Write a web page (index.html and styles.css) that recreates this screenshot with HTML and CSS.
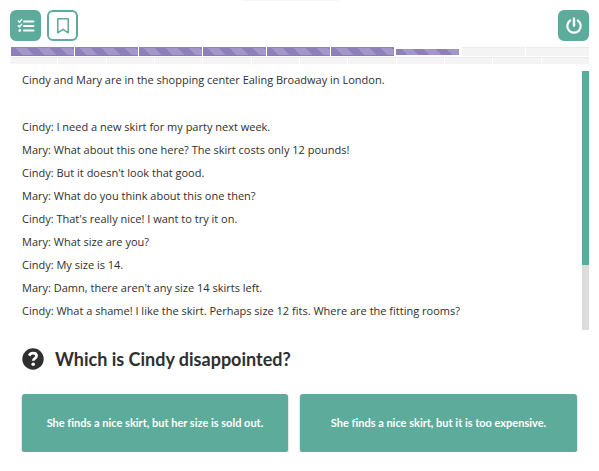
FILE: index.html
```html
<!DOCTYPE html>
<html lang="en">
<head>
    <meta charset="UTF-8">
    <meta name="viewport" content="width=device-width, initial-scale=1.0">
    <title>Reading exercise</title>
    <link rel="stylesheet" href="styles.css">
</head>
<body>
    <div class="handle"></div>
    <header class="toolbar">
        <button class="icon-btn" type="button" aria-label="Task list">
            <svg viewBox="0 0 18 16" width="18" height="16" fill="none" stroke="#fff">
                <path d="M7 3.5H16.5M7 8H16.5M7 12.5H16.5" stroke-width="1.9" stroke-linecap="round"/>
                <path d="M1.3 3L2.5 4.2L4.6 1.6M1.3 7.7L2.5 8.9L4.6 6.3" stroke-width="1.5" stroke-linecap="round" stroke-linejoin="round"/>
                <circle cx="2.8" cy="12.5" r="1.4" fill="#fff" stroke="none"/>
            </svg>
        </button>
        <button class="icon-btn outline" type="button" aria-label="Bookmark">
            <svg viewBox="0 0 14 18" width="14" height="18" fill="none" stroke="#5dab9a" stroke-width="1.5">
                <path d="M1.8 1.8H12.2V15.8L7 12.3L1.8 15.8Z" stroke-linejoin="round"/>
            </svg>
        </button>
        <button class="icon-btn power" type="button" aria-label="Quit">
            <svg viewBox="0 0 18 18" width="18" height="18" fill="none" stroke="#fff" stroke-linecap="round">
                <path d="M5.2 3.5A6.7 6.7 0 1 0 12.8 3.5" stroke-width="2.2"/>
                <path d="M9 1.8V8.5" stroke-width="2.4"/>
            </svg>
        </button>
    </header>

    <div class="progress">
        <div class="track steps">
            <span class="done"></span>
            <span class="done"></span>
            <span class="done"></span>
            <span class="done"></span>
            <span class="done"></span>
            <span class="done"></span>
            <span class="current"></span>
            <span></span>
            <span></span>
        </div>
        <div class="track parts">
            <span></span><span></span><span></span><span></span>
            <span></span><span></span><span></span><span></span>
            <span></span><span></span><span></span><span></span>
        </div>
    </div>

    <main>
        <section class="reader">
            <div class="text">
                <p class="intro">Cindy and Mary are in the shopping center Ealing Broadway in London.</p>
                <p>Cindy: I need a new skirt for my party next week.</p>
                <p>Mary: What about this one here? The skirt costs only 12 pounds!</p>
                <p>Cindy: But it doesn't look that good.</p>
                <p>Mary: What do you think about this one then?</p>
                <p>Cindy: That's really nice! I want to try it on.</p>
                <p>Mary: What size are you?</p>
                <p>Cindy: My size is 14.</p>
                <p>Mary: Damn, there aren't any size 14 skirts left.</p>
                <p>Cindy: What a shame! I like the skirt. Perhaps size 12 fits. Where are the fitting rooms?</p>
            </div>
            <div class="scrollbar"><div class="thumb"></div></div>
        </section>

        <section class="question">
            <svg viewBox="0 0 22 22" width="22" height="22" aria-hidden="true">
                <circle cx="11" cy="11" r="10.7" fill="#2f2f2f"/>
                <path d="M7.2 7.6C8 5.8 9.3 5.1 11.1 5.1C13.2 5.1 14.6 6.3 14.6 8C14.6 10.5 11.2 10.2 11.2 12.8" fill="none" stroke="#fff" stroke-width="2.7"/>
                <circle cx="11.2" cy="16.3" r="1.8" fill="#fff"/>
            </svg>
            <h1>Which is Cindy disappointed?</h1>
        </section>

        <div class="answers">
            <button type="button">She finds a nice skirt, but her size is sold out.</button>
            <button type="button">She finds a nice skirt, but it is too expensive.</button>
        </div>
    </main>
</body>
</html>
```
FILE: styles.css
```css
* {
    margin: 0;
    padding: 0;
    box-sizing: border-box;
}
body {
    padding: 0 10px;
    background: #fff;
    color: #2f2f2f;
    font-family: Lato, "Open Sans", sans-serif;
    font-variant-ligatures: none;
}
.handle {
    width: 96px;
    height: 1px;
    margin-left: 40%;
    background: #f6f6f6;
}
.toolbar {
    display: flex;
    gap: 6px;
    padding-top: 9px;
}
.icon-btn {
    display: flex;
    align-items: center;
    justify-content: center;
    width: 31px;
    height: 31px;
    background: #5dab9a;
    border: 2px solid #5dab9a;
    border-radius: 6px;
    cursor: pointer;
}
.icon-btn.outline {
    background: #fff;
}
.icon-btn.power {
    margin-left: auto;
}
.progress {
    margin-top: 6px;
}
.track {
    display: flex;
    gap: 1px;
}
.track span {
    flex: 1;
    background: #f4f4f4;
    border-top: 1px solid #ebebeb;
}
.steps {
    height: 9px;
    padding-left: 1px;
}
.parts {
    height: 7px;
    margin-top: 1px;
}
.steps .done,
.steps .current {
    background: repeating-linear-gradient(45deg, #9080ba 0, #9080ba 8px, #a396c9 8px, #a396c9 16px);
    border-top: 1px solid #9385b8;
    border-bottom: 1px solid #8a7bb2;
}
.steps .current {
    margin: 2px 2px 1px 1px;
    border: none;
}
.reader {
    display: flex;
    margin-top: 4px;
}
.text {
    flex: 1;
    padding: 0 12px;
    font-family: "Open Sans", sans-serif;
    font-size: 11px;
    line-height: 23px;
}
.text .intro {
    margin-bottom: 24px;
}
.scrollbar {
    width: 7px;
    margin-top: 3px;
    margin-bottom: -8px;
    background: #dcdcdc;
}
.thumb {
    height: 75%;
    background: #5dab9a;
}
.question {
    display: flex;
    align-items: center;
    gap: 11px;
    margin-top: 24px;
    padding: 0 12px;
}
h1 {
    font-size: 18px;
    line-height: 26px;
}
.answers {
    display: grid;
    grid-template-columns: 24fr 25fr;
    gap: 12px;
    margin-top: 22px;
    padding: 0 12px;
}
.answers button {
    padding: 20px 12px;
    background: #5dab9a;
    color: #fff;
    font: bold 11px/18px Lato, "Open Sans", sans-serif;
    font-variant-ligatures: none;
    border: none;
    border-radius: 3px;
    box-shadow: 0 1px 2px rgba(0, 0, 0, 0.35);
    cursor: pointer;
}
```
